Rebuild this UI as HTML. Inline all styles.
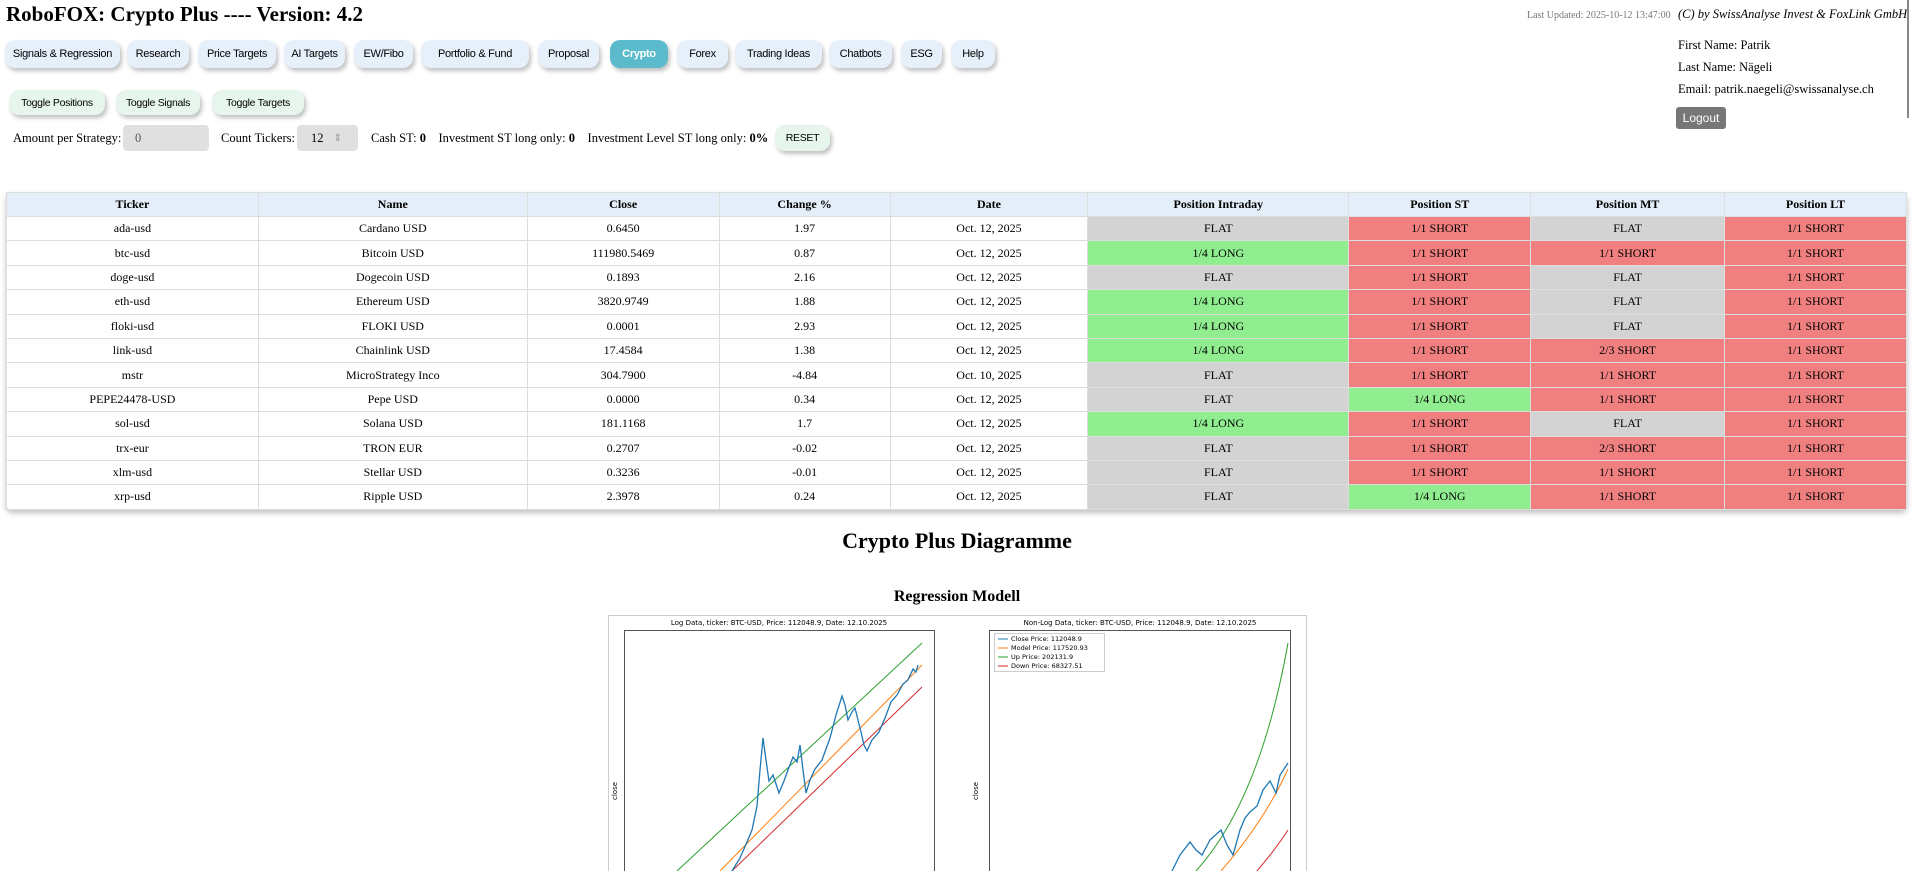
<!DOCTYPE html>
<html><head><meta charset="utf-8"><style>
body{margin:0;width:1914px;height:871px;overflow:hidden;background:#fff;font-family:"Liberation Serif",serif;position:relative;color:#000}
.a{position:absolute}
h1{position:absolute;left:6px;top:2px;margin:0;font-size:21px;font-weight:bold}
.nb{position:absolute;top:40px;height:28px;background:#e6f0fa;border-radius:10px;box-shadow:2px 3px 4px rgba(0,0,0,.25);font:11px "Liberation Sans",sans-serif;display:flex;align-items:center;justify-content:center;letter-spacing:-.3px}
.nb.act{background:#5bbacb;color:#fff;font-weight:bold}
.tb{position:absolute;top:90px;height:25px;background:#e6f6ec;border-radius:10px;box-shadow:2px 3px 4px rgba(0,0,0,.25);font:10.5px "Liberation Sans",sans-serif;display:flex;align-items:center;justify-content:center;letter-spacing:-.3px}
.ctl{position:absolute;top:131px;font-size:12.5px;white-space:nowrap}
.inp{position:absolute;top:125px;height:26px;background:#e0e0e0;border-radius:4px;font-size:12.5px;color:#555;display:flex;align-items:center}
table{position:absolute;left:6px;top:192px;width:1901px;border-collapse:collapse;font-size:12px;box-shadow:0 3px 6px rgba(0,0,0,.25);border-radius:6px}
td,th{border:1px solid #ddd;text-align:center;height:23.4px;padding:0}
th{background:#e3eef9;height:23px}
.F{background:#d3d3d3}.L{background:#90ee90}.S{background:#f08080}
</style></head><body>
<h1>RoboFOX: Crypto Plus ---- Version: 4.2</h1>
<div class="nb" style="left:5px;width:115px">Signals &amp; Regression</div>
<div class="nb" style="left:127px;width:62px">Research</div>
<div class="nb" style="left:198px;width:78px">Price Targets</div>
<div class="nb" style="left:284px;width:61px">AI Targets</div>
<div class="nb" style="left:354px;width:59px">EW/Fibo</div>
<div class="nb" style="left:421px;width:108px">Portfolio &amp; Fund</div>
<div class="nb" style="left:538px;width:61px">Proposal</div>
<div class="nb act" style="left:610px;width:58px">Crypto</div>
<div class="nb" style="left:677px;width:51px">Forex</div>
<div class="nb" style="left:735px;width:87px">Trading Ideas</div>
<div class="nb" style="left:829px;width:63px">Chatbots</div>
<div class="nb" style="left:901px;width:41px">ESG</div>
<div class="nb" style="left:951px;width:44px">Help</div>
<div class="tb" style="left:9px;width:96px">Toggle Positions</div>
<div class="tb" style="left:116px;width:84px">Toggle Signals</div>
<div class="tb" style="left:212px;width:92px">Toggle Targets</div>
<div class="ctl" style="left:13px">Amount per Strategy:</div>
<div class="inp" style="left:123px;width:86px"><span style="margin-left:12px">0</span></div>
<div class="ctl" style="left:221px">Count Tickers:</div>
<div class="inp" style="left:297px;width:61px;color:#000"><span style="margin-left:14px">12</span><span style="margin-left:10px;color:#999;font-size:10px">⇕</span></div>
<div class="ctl" style="left:371px">Cash ST: <b>0</b> &nbsp;&nbsp; Investment ST long only: <b>0</b> &nbsp;&nbsp; Investment Level ST long only: <b>0%</b></div>
<div class="tb" style="left:775px;top:125px;width:55px;height:26px">RESET</div>
<div class="a" style="left:1527px;top:10px;font-size:10px;color:#777;white-space:nowrap">Last Updated: 2025-10-12 13:47:00</div>
<div class="a" style="left:1678px;top:7px;font-size:12.5px;font-style:italic;white-space:nowrap">(C) by SwissAnalyse Invest &amp; FoxLink GmbH</div>
<div class="a" style="left:1678px;top:38px;font-size:12.5px">First Name: Patrik</div>
<div class="a" style="left:1678px;top:60px;font-size:12.5px">Last Name: Nägeli</div>
<div class="a" style="left:1678px;top:82px;font-size:12.5px;white-space:nowrap">Email: patrik.naegeli@swissanalyse.ch</div>
<div class="a" style="left:1676px;top:107px;width:50px;height:22px;background:#777;color:#fff;border-radius:3px;font:12px 'Liberation Sans',sans-serif;display:flex;align-items:center;justify-content:center">Logout</div>
<div class="a" style="left:1907px;top:0;width:2px;height:118px;background:#888"></div>
<table>
<colgroup><col style="width:252px"><col style="width:269px"><col style="width:192px"><col style="width:171px"><col style="width:198px"><col style="width:261px"><col style="width:182px"><col style="width:194px"><col style="width:182px"></colgroup>
<tr><th>Ticker</th><th>Name</th><th>Close</th><th>Change %</th><th>Date</th><th>Position Intraday</th><th>Position ST</th><th>Position MT</th><th>Position LT</th></tr>
<tr><td>ada-usd</td><td>Cardano USD</td><td>0.6450</td><td>1.97</td><td>Oct. 12, 2025</td><td class="F">FLAT</td><td class="S">1/1 SHORT</td><td class="F">FLAT</td><td class="S">1/1 SHORT</td></tr>
<tr><td>btc-usd</td><td>Bitcoin USD</td><td>111980.5469</td><td>0.87</td><td>Oct. 12, 2025</td><td class="L">1/4 LONG</td><td class="S">1/1 SHORT</td><td class="S">1/1 SHORT</td><td class="S">1/1 SHORT</td></tr>
<tr><td>doge-usd</td><td>Dogecoin USD</td><td>0.1893</td><td>2.16</td><td>Oct. 12, 2025</td><td class="F">FLAT</td><td class="S">1/1 SHORT</td><td class="F">FLAT</td><td class="S">1/1 SHORT</td></tr>
<tr><td>eth-usd</td><td>Ethereum USD</td><td>3820.9749</td><td>1.88</td><td>Oct. 12, 2025</td><td class="L">1/4 LONG</td><td class="S">1/1 SHORT</td><td class="F">FLAT</td><td class="S">1/1 SHORT</td></tr>
<tr><td>floki-usd</td><td>FLOKI USD</td><td>0.0001</td><td>2.93</td><td>Oct. 12, 2025</td><td class="L">1/4 LONG</td><td class="S">1/1 SHORT</td><td class="F">FLAT</td><td class="S">1/1 SHORT</td></tr>
<tr><td>link-usd</td><td>Chainlink USD</td><td>17.4584</td><td>1.38</td><td>Oct. 12, 2025</td><td class="L">1/4 LONG</td><td class="S">1/1 SHORT</td><td class="S">2/3 SHORT</td><td class="S">1/1 SHORT</td></tr>
<tr><td>mstr</td><td>MicroStrategy Inco</td><td>304.7900</td><td>-4.84</td><td>Oct. 10, 2025</td><td class="F">FLAT</td><td class="S">1/1 SHORT</td><td class="S">1/1 SHORT</td><td class="S">1/1 SHORT</td></tr>
<tr><td>PEPE24478-USD</td><td>Pepe USD</td><td>0.0000</td><td>0.34</td><td>Oct. 12, 2025</td><td class="F">FLAT</td><td class="L">1/4 LONG</td><td class="S">1/1 SHORT</td><td class="S">1/1 SHORT</td></tr>
<tr><td>sol-usd</td><td>Solana USD</td><td>181.1168</td><td>1.7</td><td>Oct. 12, 2025</td><td class="L">1/4 LONG</td><td class="S">1/1 SHORT</td><td class="F">FLAT</td><td class="S">1/1 SHORT</td></tr>
<tr><td>trx-eur</td><td>TRON EUR</td><td>0.2707</td><td>-0.02</td><td>Oct. 12, 2025</td><td class="F">FLAT</td><td class="S">1/1 SHORT</td><td class="S">2/3 SHORT</td><td class="S">1/1 SHORT</td></tr>
<tr><td>xlm-usd</td><td>Stellar USD</td><td>0.3236</td><td>-0.01</td><td>Oct. 12, 2025</td><td class="F">FLAT</td><td class="S">1/1 SHORT</td><td class="S">1/1 SHORT</td><td class="S">1/1 SHORT</td></tr>
<tr><td>xrp-usd</td><td>Ripple USD</td><td>2.3978</td><td>0.24</td><td>Oct. 12, 2025</td><td class="F">FLAT</td><td class="L">1/4 LONG</td><td class="S">1/1 SHORT</td><td class="S">1/1 SHORT</td></tr>
</table>
<div class="a" style="left:0;width:1914px;top:528px;text-align:center;font-size:22px;font-weight:bold">Crypto Plus Diagramme</div>
<div class="a" style="left:0;width:1914px;top:588px;text-align:center;font-size:16px;font-weight:bold">Regression Modell</div>
<svg class="a" style="left:0;top:0" width="1914" height="871">
<rect x="608.5" y="615.5" width="698" height="270" fill="#fff" stroke="#ccc"/>
<text x="779" y="625" font-family="DejaVu Sans" font-size="7" text-anchor="middle">Log Data, ticker: BTC-USD, Price: 112048.9, Date: 12.10.2025</text>
<rect x="624.5" y="630.5" width="310" height="250" fill="none" stroke="#555"/>
<text x="1140" y="625" font-family="DejaVu Sans" font-size="7" text-anchor="middle">Non-Log Data, ticker: BTC-USD, Price: 112048.9, Date: 12.10.2025</text>
<rect x="989.5" y="630.5" width="301" height="250" fill="none" stroke="#555"/>
<text x="617" y="800" font-family="DejaVu Sans" font-size="7" transform="rotate(-90 617 800)">close</text>
<text x="978" y="800" font-family="DejaVu Sans" font-size="7" transform="rotate(-90 978 800)">close</text>
<line x1="677" y1="871" x2="922" y2="643" stroke="#2ca02c"/>
<line x1="720" y1="871" x2="922" y2="665" stroke="#ff7f0e"/>
<line x1="732" y1="871" x2="922" y2="687" stroke="#d62728"/>
<polyline fill="none" stroke="#1f77b4" stroke-width="1.3" points="732,871 740,858 747,842 752,830 757,806 760,770 763,738 766,760 769,781 773,775 779,793 784,781 788,770 793,757 797,762 800,745 803,770 806,793 810,780 815,769 822,760 830,738 836,715 842,696 845,705 848,720 852,712 855,708 858,720 861,732 864,745 867,751 872,740 879,732 885,718 891,702 897,695 903,684 908,680 913,669 916,672 918,665"/>
<path d="M1196,871 Q1260,800 1288,643" fill="none" stroke="#2ca02c"/>
<path d="M1221,871 Q1265,820 1288,769" fill="none" stroke="#ff7f0e"/>
<path d="M1257,871 Q1275,850 1288,830" fill="none" stroke="#d62728"/>
<polyline fill="none" stroke="#1f77b4" stroke-width="1.3" points="1172,871 1180,855 1190,842 1196,850 1202,855 1210,840 1221,830 1227,845 1233,855 1240,830 1245,818 1250,812 1257,806 1263,790 1270,781 1276,793 1280,775 1288,763"/>
<rect x="994.5" y="633.5" width="110" height="38" fill="#fff" stroke="#ccc"/>
<g font-family="DejaVu Sans" font-size="6.5">
<line x1="998" y1="639" x2="1008" y2="639" stroke="#1f77b4"/><text x="1011" y="641">Close Price: 112048.9</text>
<line x1="998" y1="648" x2="1008" y2="648" stroke="#ff7f0e"/><text x="1011" y="650">Model Price: 117520.93</text>
<line x1="998" y1="657" x2="1008" y2="657" stroke="#2ca02c"/><text x="1011" y="659">Up Price: 202131.9</text>
<line x1="998" y1="666" x2="1008" y2="666" stroke="#d62728"/><text x="1011" y="668">Down Price: 68327.51</text>
</g>
</svg>
</body></html>
